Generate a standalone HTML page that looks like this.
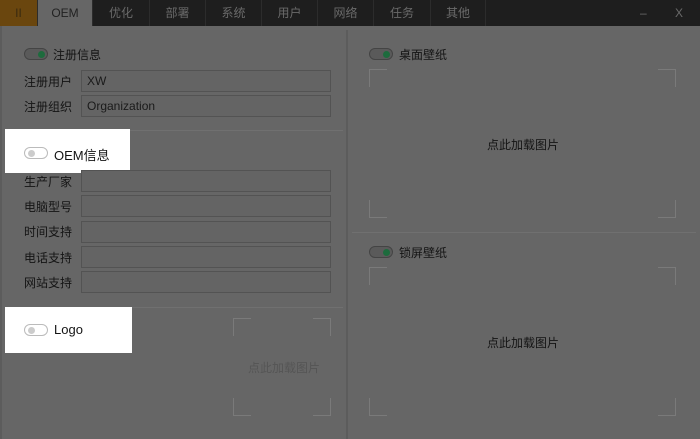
<!DOCTYPE html>
<html><head><meta charset="utf-8"><style>
*{margin:0;padding:0;box-sizing:border-box}
body{width:700px;height:439px;background:#666;position:relative;overflow:hidden;font-family:"Liberation Sans","Noto Sans CJK SC",sans-serif;font-size:12px;color:#141414}
.bar{position:absolute;left:0;top:0;width:700px;height:26px;background:#1e1e1e}
.tab{position:absolute;top:0;height:26px;line-height:26px;text-align:center;color:#6a6a6a;border-right:1px solid #2c2c2c}
.a{position:absolute}
.inp{position:absolute;left:81px;width:250px;height:22px;border:1px solid #535353;background:#646464;padding-left:5px;line-height:20px;color:#1a1a1a}
.lbl{position:absolute;left:24px}
.tg{position:absolute;width:24px;height:12px;border-radius:6px;border:1px solid #444;background:#5a5a5a}
.tg i{position:absolute;right:2px;top:2px;width:7px;height:7px;border-radius:50%;background:#1d6b3d}
.tw{position:absolute;width:24px;height:12px;border-radius:6px;border:1px solid #bbb;background:#fff}
.tw i{position:absolute;left:3px;top:2px;width:7px;height:7px;border-radius:50%;background:#ccc}
.hl{position:absolute;height:1px;background:#5a5a5a;border-bottom:1px solid #707070}
.c{position:absolute;border-color:#7a7a7a;border-style:solid;width:18px;height:18px}
</style></head><body>
<div class="bar"></div>
<div class="tab" style="left:0;width:38px;background:#6a460e;color:#3a2a10">II</div>
<div class="tab" style="left:38px;width:55px;background:#666;color:#222">OEM</div>
<div class="tab" style="left:93px;width:57px">优化</div>
<div class="tab" style="left:150px;width:56px">部署</div>
<div class="tab" style="left:206px;width:56px">系统</div>
<div class="tab" style="left:262px;width:56px">用户</div>
<div class="tab" style="left:318px;width:56px">网络</div>
<div class="tab" style="left:374px;width:57px">任务</div>
<div class="tab" style="left:431px;width:55px">其他</div>
<div class="a" style="left:640px;top:6px;color:#6a6a6a">–</div>
<div class="a" style="left:675px;top:6px;color:#6a6a6a">X</div>
<div class="a" style="left:0;top:26px;width:2px;height:413px;background:#5c5c5c"></div>
<div class="a" style="left:346px;top:30px;width:2px;height:409px;background:#5c5c5c"></div>

<div class="tg" style="left:24px;top:48px"><i></i></div><div class="a" style="left:53px;top:46px">注册信息</div>
<div class="lbl" style="top:73px">注册用户</div><div class="inp" style="top:70px">XW</div>
<div class="lbl" style="top:98px">注册组织</div><div class="inp" style="top:95px">Organization</div>
<div class="hl" style="left:5px;top:130px;width:338px"></div>
<div class="a" style="left:5px;top:129px;width:125px;height:44px;background:#fff"></div>
<div class="tw" style="left:24px;top:147px"><i></i></div><div class="a" style="left:54px;top:145px;font-size:13px">OEM信息</div>
<div class="lbl" style="top:173px">生产厂家</div><div class="inp" style="top:170px"></div>
<div class="lbl" style="top:198px">电脑型号</div><div class="inp" style="top:195px"></div>
<div class="lbl" style="top:223px">时间支持</div><div class="inp" style="top:221px"></div>
<div class="lbl" style="top:249px">电话支持</div><div class="inp" style="top:246px"></div>
<div class="lbl" style="top:274px">网站支持</div><div class="inp" style="top:271px"></div>
<div class="hl" style="left:5px;top:307px;width:338px"></div>
<div class="a" style="left:5px;top:307px;width:127px;height:46px;background:#fff"></div>
<div class="tw" style="left:24px;top:324px"><i></i></div><div class="a" style="left:54px;top:322px;font-size:13px">Logo</div>
<div class="c" style="left:233px;top:318px;border-width:1px 0 0 1px"></div>
<div class="c" style="left:313px;top:318px;border-width:1px 1px 0 0"></div>
<div class="c" style="left:233px;top:398px;border-width:0 0 1px 1px"></div>
<div class="c" style="left:313px;top:398px;border-width:0 1px 1px 0"></div>
<div class="a" style="left:248px;top:359px;color:#555">点此加载图片</div>

<div class="tg" style="left:369px;top:48px"><i></i></div><div class="a" style="left:399px;top:46px">桌面壁纸</div>
<div class="c" style="left:369px;top:69px;border-width:1px 0 0 1px"></div>
<div class="c" style="left:658px;top:69px;border-width:1px 1px 0 0"></div>
<div class="c" style="left:369px;top:200px;border-width:0 0 1px 1px"></div>
<div class="c" style="left:658px;top:200px;border-width:0 1px 1px 0"></div>
<div class="a" style="left:487px;top:136px">点此加载图片</div>
<div class="hl" style="left:352px;top:232px;width:344px"></div>
<div class="tg" style="left:369px;top:246px"><i></i></div><div class="a" style="left:399px;top:244px">锁屏壁纸</div>
<div class="c" style="left:369px;top:267px;border-width:1px 0 0 1px"></div>
<div class="c" style="left:658px;top:267px;border-width:1px 1px 0 0"></div>
<div class="c" style="left:369px;top:398px;border-width:0 0 1px 1px"></div>
<div class="c" style="left:658px;top:398px;border-width:0 1px 1px 0"></div>
<div class="a" style="left:487px;top:334px">点此加载图片</div>
</body></html>
